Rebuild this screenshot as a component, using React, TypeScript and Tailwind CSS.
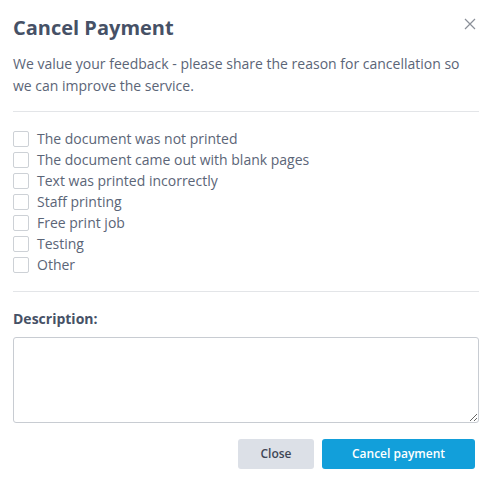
import React from "react";

const reasons = [
  "The document was not printed",
  "The document came out with blank pages",
  "Text was printed incorrectly",
  "Staff printing",
  "Free print job",
  "Testing",
  "Other",
];

export default function App() {
  return (
    <div
      className="w-[491px] h-[481px] bg-white relative pl-[13px] pr-[12px] pt-[14px]"
      style={{ fontFamily: '"Open Sans", sans-serif' }}
    >
      <button className="absolute right-[14px] top-[17px] w-[14px] h-[14px] text-[#8a8f98]">
        <svg viewBox="0 0 14 14" width="14" height="14" fill="none" stroke="currentColor" strokeWidth="1.2">
          <path d="M2 2 L12 12 M12 2 L2 12" />
        </svg>
      </button>
      <h1 className="text-[20px] leading-[28px] font-bold text-[#465166]">Cancel Payment</h1>
      <p className="mt-[11px] text-[14px] leading-[22px] text-[#5b6577]">
        We value your feedback - please share the reason for cancellation so we can improve the service.
      </p>
      <div className="mt-[14px] h-px bg-[#e3e5e8]" />
      <div className="mt-[16px] flex flex-col">
        {reasons.map((r) => (
          <label key={r} className="flex items-center h-[21px] gap-[8px] text-[14px] text-[#5b6577]">
            <span className="shrink-0 w-[16px] h-[16px] border border-[#cdd1d6] rounded-[2px] bg-white" />
            <span>{r}</span>
          </label>
        ))}
      </div>
      <div className="mt-[16px] h-px bg-[#e3e5e8]" />
      <div className="mt-[16px] text-[14px] leading-[22px] font-bold text-[#465166]">Description:</div>
      <textarea className="mt-[7px] block w-full h-[86px] border border-[#c8ccd2] rounded-[3px] resize-y outline-none" />
      <div className="mt-[16px] flex justify-end gap-[8px] pr-[4px]">
        <button className="w-[76px] h-[30px] rounded-[3px] bg-[#dce0e7] text-[#3f4756] text-[12px] font-semibold">
          Close
        </button>
        <button className="w-[153px] h-[30px] rounded-[3px] bg-[#129fda] text-white text-[12px] font-semibold">
          Cancel payment
        </button>
      </div>
    </div>
  );
}
